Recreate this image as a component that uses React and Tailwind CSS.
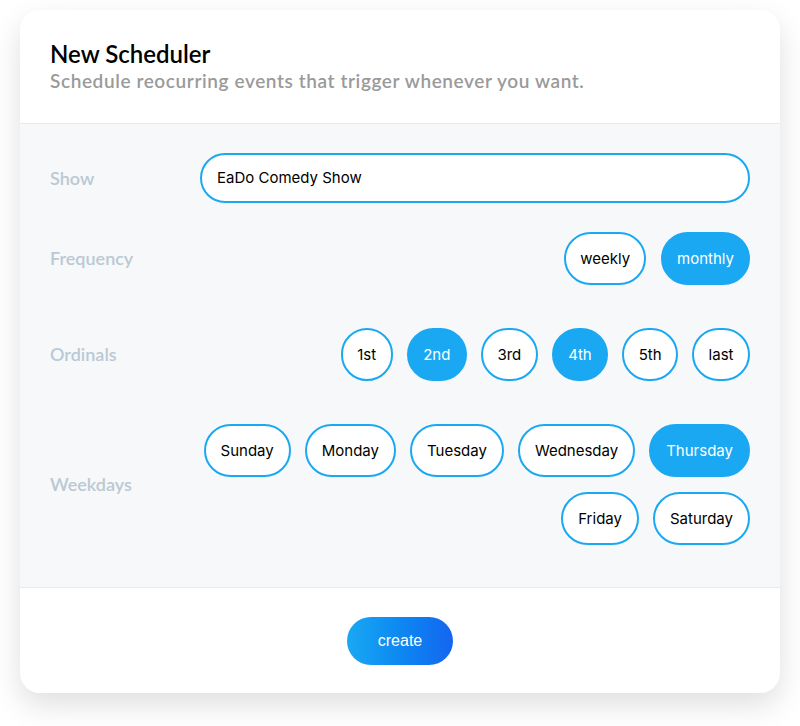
const FREQUENCIES = [
  { label: 'weekly', on: false },
  { label: 'monthly', on: true },
]

const ORDINALS = [
  { label: '1st', on: false },
  { label: '2nd', on: true },
  { label: '3rd', on: false },
  { label: '4th', on: true },
  { label: '5th', on: false },
  { label: 'last', on: false },
]

const WEEKDAYS = [
  { label: 'Sunday', on: false },
  { label: 'Monday', on: false },
  { label: 'Tuesday', on: false },
  { label: 'Wednesday', on: false },
  { label: 'Thursday', on: true },
  { label: 'Friday', on: false },
  { label: 'Saturday', on: false },
]

const headFont = { fontFamily: '"Lato", "Noto Sans", sans-serif' }
const bodyFont = { fontFamily: '"Inter", "Liberation Sans", sans-serif' }

function Pill({ label, on, pad = 'px-[15px]' }) {
  return (
    <button
      className={`h-[53px] ${pad} rounded-full border-2 text-[15px] leading-none ${
        on ? 'bg-[#1aa8f2] border-[#1aa8f2] text-white' : 'bg-white border-[#1aa8f2] text-black'
      }`}
      style={bodyFont}
    >
      {label}
    </button>
  )
}

function Row({ label, children, className = '' }) {
  return (
    <div className={`grid grid-cols-[150px_1fr] items-center ${className}`}>
      <span className="text-[18px] font-semibold text-[#bac9d4]" style={headFont}>
        {label}
      </span>
      {children}
    </div>
  )
}

export default function App() {
  return (
    <div className="min-h-[726px] bg-white px-[20px] pt-[10px]">
      <div className="w-[760px] rounded-[20px] bg-white shadow-[0_12px_30px_rgba(0,0,0,0.13)] overflow-hidden">
        <div className="h-[113px] px-[30px] pt-[29px]" style={headFont}>
          <h1 className="text-[24px] leading-[30px] font-semibold text-black">New Scheduler</h1>
          <p className="text-[19px] leading-[24px] font-semibold tracking-[0.6px] text-[#9a9a9a]">
            Schedule reocurring events that trigger whenever you want.
          </p>
        </div>

        <div className="bg-[#f7f8fa] border-y border-[#e5eaef] px-[30px] pt-[29px] pb-[42px]">
          <Row label="Show">
            <div
              className="h-[50px] rounded-full border-2 border-[#1aa8f2] bg-white flex items-center px-[15px] text-[15px] text-black"
              style={bodyFont}
            >
              EaDo Comedy Show
            </div>
          </Row>

          <Row label="Frequency" className="mt-[29px]">
            <div className="flex justify-end gap-[15px]">
              {FREQUENCIES.map(f => (
                <Pill key={f.label} {...f} pad="px-[14px]" />
              ))}
            </div>
          </Row>

          <Row label="Ordinals" className="mt-[43px]">
            <div className="flex justify-end gap-[14px]">
              {ORDINALS.map(o => (
                <Pill key={o.label} {...o} pad="px-[14.5px]" />
              ))}
            </div>
          </Row>

          <Row label="Weekdays" className="mt-[43px]">
            <div className="flex flex-wrap justify-end gap-x-[14px] gap-y-[15px]">
              {WEEKDAYS.map(d => (
                <Pill key={d.label} {...d} />
              ))}
            </div>
          </Row>
        </div>

        <div className="h-[105px] flex items-center justify-center">
          <button
            className="h-[48px] w-[106px] rounded-full bg-gradient-to-r from-[#1aa8f2] to-[#1565f0] text-white text-[16px]"
            style={{ fontFamily: '"Liberation Sans", Arial, sans-serif' }}
          >
            create
          </button>
        </div>
      </div>
    </div>
  )
}
